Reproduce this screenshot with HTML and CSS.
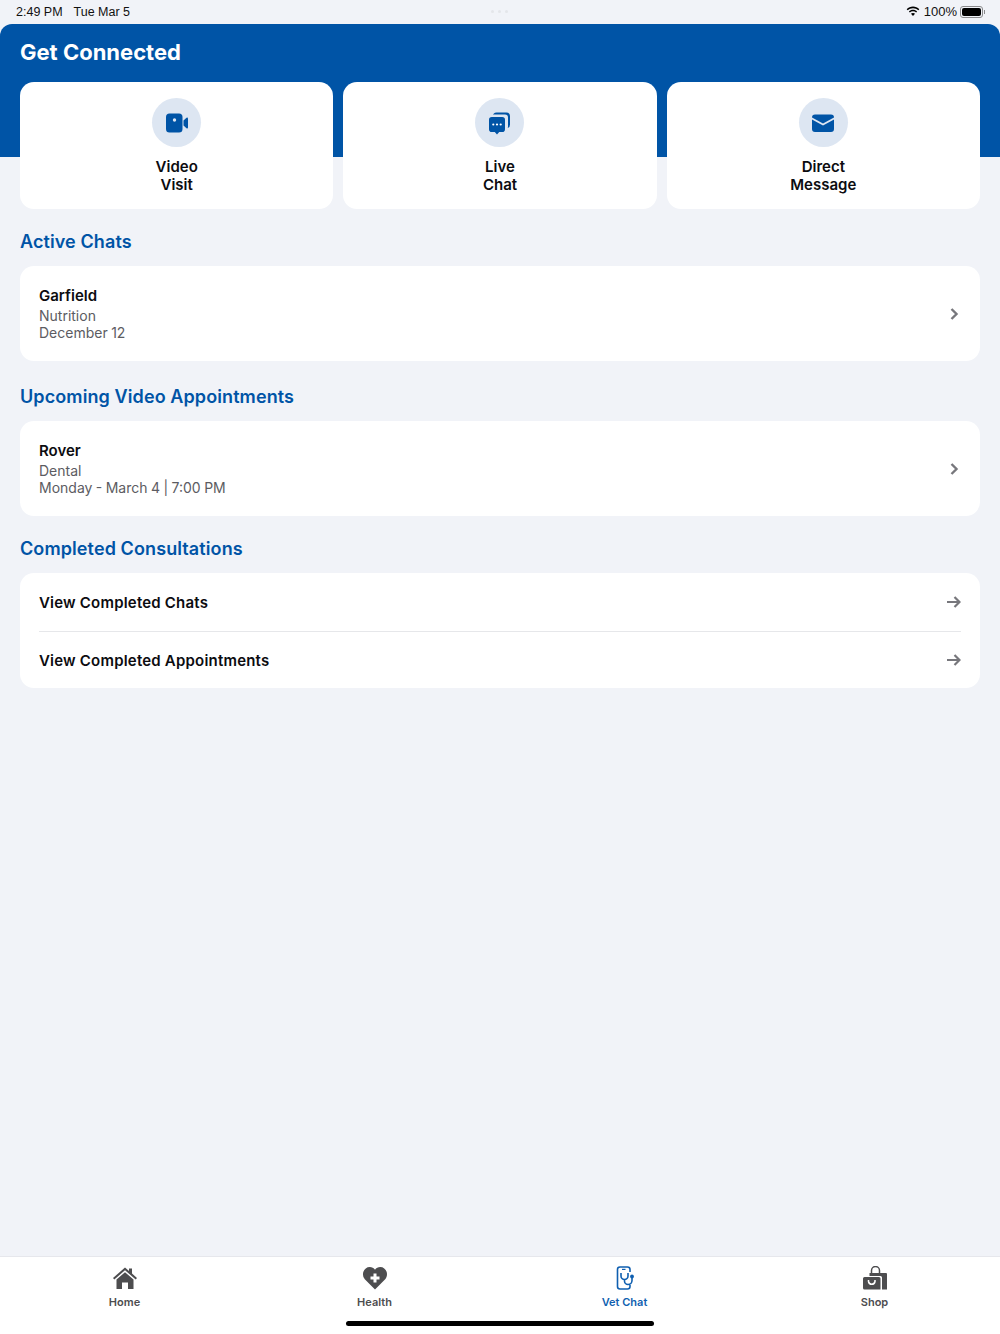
FILE: index.html
```html
<!DOCTYPE html>
<html lang="en">
<head>
    <meta charset="UTF-8">
    <meta name="viewport" content="width=device-width, initial-scale=1.0">
    <title>Get Connected</title>
    <link rel="stylesheet" href="styles.css">
</head>
<body>

<div class="page">
    <div class="status-bar">
        <div class="status-time"><span>2:49 PM</span><span>Tue Mar 5</span></div>
        <div class="status-dots"><i></i><i></i><i></i></div>
        <div class="status-right">
            <svg class="wifi" width="14" height="11" viewBox="0 0 16 12"><path d="M8 2.200c2.400 0 4.500.9 6.100 2.400l1.100-1.200C13.300 1.500 10.800.4 8 .4S2.700 1.500.8 3.400l1.100 1.200C3.500 3.100 5.600 2.200 8 2.200zM8 5.800c1.400 0 2.600.5 3.600 1.400l1.100-1.200C11.400 4.800 9.800 4.100 8 4.100S4.600 4.800 3.300 6l1.100 1.200c1-.9 2.200-1.400 3.600-1.400zM8 7.800c-.9 0-1.700.3-2.300.9L8 11.200l2.300-2.500c-.6-.6-1.400-.9-2.300-.9z" fill="#000"/></svg>
            <span>100%</span>
            <div class="battery"><div class="battery-fill"></div></div>
            <div class="battery-tip"></div>
        </div>
    </div>

    <div class="hero">
        <h1 class="hero-title">Get Connected</h1>
        <div class="connect-row">
            <div class="connect-card">
                <div class="connect-icon">
                    <svg width="24" height="24" viewBox="0 0 24 24"><path d="M4.500 2.500h9.500a3.500 3.500 0 0 1 3.500 3.500v12a3.500 3.500 0 0 1-3.500 3.500H4.500A3.500 3.500 0 0 1 1 18V6a3.500 3.500 0 0 1 3.500-3.500z" fill="#0054a6"/><path d="M18.500 9.500 21.500 6.800a1 1 0 0 1 1.500.7v9a1 1 0 0 1-1.500.7l-3-2.700z" fill="#0054a6"/><circle cx="9.500" cy="9" r="1.700" fill="#dde6f2"/></svg>
                </div>
                <div class="connect-label">Video<br>Visit</div>
            </div>
            <div class="connect-card">
                <div class="connect-icon">
                    <svg width="24" height="24" viewBox="0 0 24 24"><rect x="5" y="1.500" width="17" height="15.500" rx="3.500" fill="#0054a6"/><rect x="3" y="3.500" width="17" height="15" rx="3" fill="#dde6f2"/><path d="M3.800 6h10.400A2.800 2.800 0 0 1 17 8.800v9.400a2.800 2.800 0 0 1-2.800 2.800h-3L9 23.500 6.800 21h-3A2.800 2.800 0 0 1 1 18.200V8.800A2.800 2.800 0 0 1 3.800 6z" fill="#0054a6"/><circle cx="5.300" cy="13.500" r="1.100" fill="#fff"/><circle cx="9" cy="13.500" r="1.100" fill="#fff"/><circle cx="12.700" cy="13.500" r="1.100" fill="#fff"/></svg>
                </div>
                <div class="connect-label">Live<br>Chat</div>
            </div>
            <div class="connect-card">
                <div class="connect-icon">
                    <svg width="24" height="24" viewBox="0 0 24 24"><path d="M4 3.500h16A3 3 0 0 1 23 6.500l-11 6-11-6a3 3 0 0 1 3-3z" fill="#0054a6"/><path d="M1 8.600l11 6 11-6V18a3 3 0 0 1-3 3H4a3 3 0 0 1-3-3z" fill="#0054a6"/></svg>
                </div>
                <div class="connect-label">Direct<br>Message</div>
            </div>
        </div>
    </div>

    <div class="content">
        <h2 class="section-title first">Active Chats</h2>
        <div class="list-card detail">
            <div>
                <div class="item-name">Garfield</div>
                <div class="item-sub">Nutrition</div>
                <div class="item-sub">December 12</div>
            </div>
            <svg class="chevron" width="10" height="14" viewBox="0 0 10 14"><path d="M2.500 2l5 5-5 5" fill="none" stroke="#77777c" stroke-width="2.400"/></svg>
        </div>

        <h2 class="section-title">Upcoming Video Appointments</h2>
        <div class="list-card detail">
            <div>
                <div class="item-name">Rover</div>
                <div class="item-sub">Dental</div>
                <div class="item-sub">Monday - March 4 | 7:00 PM</div>
            </div>
            <svg class="chevron" width="10" height="14" viewBox="0 0 10 14"><path d="M2.500 2l5 5-5 5" fill="none" stroke="#77777c" stroke-width="2.400"/></svg>
        </div>

        <h2 class="section-title third">Completed Consultations</h2>
        <div class="list-card links">
            <div class="link-row">
                <span>View Completed Chats</span>
                <svg width="14" height="12" viewBox="0 0 14 12"><path d="M0 6h12.500M7.500 1l5 5-5 5" fill="none" stroke="#77777c" stroke-width="2.200"/></svg>
            </div>
            <div class="link-row">
                <span>View Completed Appointments</span>
                <svg width="14" height="12" viewBox="0 0 14 12"><path d="M0 6h12.500M7.500 1l5 5-5 5" fill="none" stroke="#77777c" stroke-width="2.200"/></svg>
            </div>
        </div>
    </div>

    <div class="tab-bar">
        <div class="tab">
            <svg width="26" height="24" viewBox="0 0 26 24"><path d="M13 1.500 1 12l1.300 1.400L13 4.200l10.700 9.200L25 12l-5-4.400V2.500h-3v2.500z" fill="#4d4d4f"/><path d="M13 6.200 4.500 13.500V23H10v-6.500h6V23h5.500v-9.500z" fill="#4d4d4f"/></svg>
            <span>Home</span>
        </div>
        <div class="tab">
            <svg width="26" height="24" viewBox="0 0 26 24"><path d="M13 23.500 2.800 13.300A7 7 0 0 1 1 8.300C1 4.300 4 1 7.800 1c2.100 0 4 1 5.200 2.700C14.200 2 16.100 1 18.200 1 22 1 25 4.300 25 8.300c0 1.900-.7 3.700-1.800 5z" fill="#4d4d4f"/><path d="M11.500 7.500h3v3h3v3h-3v3h-3v-3h-3v-3h3z" fill="#fff"/></svg>
            <span>Health</span>
        </div>
        <div class="tab active">
            <svg width="26" height="24" viewBox="0 0 26 24"><path d="M18 6V3.500A2.500 2.500 0 0 0 15.500 1h-7.500a2.500 2.500 0 0 0-2.500 2.500v17a2.500 2.500 0 0 0 2.500 2.500h7.500a2.500 2.500 0 0 0 2.500-2.500V19" fill="none" stroke="#0f5fb0" stroke-width="1.600"/><path d="M10 3.400h3.500" stroke="#0f5fb0" stroke-width="1.200"/><path d="M9 7v3a3.500 3.500 0 0 0 7 0V7M12.500 13.500V15a3.500 3.500 0 0 0 3.500 3.500 4 4 0 0 0 4-4V12" fill="none" stroke="#0f5fb0" stroke-width="1.600"/><circle cx="20" cy="10.500" r="1.900" fill="#0f5fb0"/></svg>
            <span>Vet Chat</span>
        </div>
        <div class="tab">
            <svg width="26" height="24" viewBox="0 0 26 24"><path d="M9.500 7V4.500a4 4 0 0 1 8 0V7" fill="none" stroke="#4d4d4f" stroke-width="1.500"/><path d="M7.500 7H24a1 1 0 0 1 1 1v15.500h-5V11.500a1.500 1.500 0 0 0-1.500-1.500H7.500z" fill="#4d4d4f"/><path d="M2.500 11h14.500a1.500 1.500 0 0 1 1.500 1.500v11h-16A1.500 1.500 0 0 1 1 22v-9.500A1.500 1.500 0 0 1 2.500 11z" fill="#4d4d4f"/><path d="M6.500 14v1.500a3.300 3.300 0 0 0 6.500 0V14" fill="none" stroke="#fff" stroke-width="1.500"/></svg>
            <span>Shop</span>
        </div>
        <div class="home-indicator"></div>
    </div>
</div>

</body>
</html>
```

FILE: styles.css
```css
* {
    box-sizing: border-box;
}
body {
    margin: 0;
    font-family: Inter, "Open Sans", Arial, sans-serif;
    background-color: #f1f3f8;
    color: #0c0c10;
}
.page {
    width: 1000px;
    height: 1334px;
    display: flex;
    flex-direction: column;
    overflow: hidden;
}

/* status bar */
.status-bar {
    height: 24px;
    padding: 0 15px 1px 16px;
    display: flex;
    align-items: center;
    justify-content: space-between;
    position: relative;
    font-family: "Liberation Sans", Arial, sans-serif;
    font-size: 12.5px;
    color: #111;
}
.status-time {
    display: flex;
    gap: 11px;
}
.status-dots {
    position: absolute;
    left: 491px;
    top: 10px;
    display: flex;
    gap: 4px;
}
.status-dots i {
    width: 3px;
    height: 3px;
    border-radius: 50%;
    background-color: #e4e6ea;
}
.status-right {
    display: flex;
    align-items: center;
    font-size: 13px;
}
.wifi {
    margin-right: 4px;
}
.battery {
    width: 23px;
    height: 12px;
    margin-left: 3px;
    padding: 1px;
    border: 1px solid #8a8a8c;
    border-radius: 3px;
}
.battery-fill {
    width: 100%;
    height: 100%;
    background-color: #000;
    border-radius: 2px;
}
.battery-tip {
    width: 1px;
    height: 4px;
    margin-left: 1px;
    background-color: #8a8a8c;
}

/* blue header */
.hero {
    height: 133px;
    padding: 0 20px;
    background-color: #0054a6;
    border-radius: 12px 12px 0 0;
}
.hero-title {
    margin: 0;
    padding-top: 14px;
    height: 58px;
    font-size: 22px;
    line-height: 28px;
    font-weight: 700;
    color: #fff;
}
.connect-row {
    display: flex;
    gap: 10px;
}
.connect-card {
    flex: 1;
    height: 127px;
    padding-top: 16px;
    background-color: #fff;
    border-radius: 14px;
    text-align: center;
}
.connect-icon {
    width: 49px;
    height: 49px;
    margin: 0 auto 11px;
    border-radius: 50%;
    background-color: #dde6f2;
    display: flex;
    align-items: center;
    justify-content: center;
}
.connect-label {
    font-size: 15px;
    line-height: 18px;
    font-weight: 600;
    color: #0c0c10;
}

/* lists */
.content {
    flex: 1;
    padding: 0 20px;
}
.section-title {
    margin: 0;
    font-size: 18px;
    line-height: 24px;
    font-weight: 600;
    letter-spacing: 0.1px;
    color: #0054a6;
    padding: 24px 0 12px;
}
.section-title.first {
    padding-top: 73px;
}
.section-title.third {
    padding-top: 21px;
}
.list-card {
    background-color: #fff;
    border-radius: 14px;
}
.list-card.detail {
    height: 95px;
    padding: 0 21px 0 19px;
    display: flex;
    align-items: center;
    justify-content: space-between;
}
.item-name {
    font-size: 15px;
    line-height: 20px;
    font-weight: 600;
    margin-bottom: 1px;
}
.item-sub {
    font-size: 14px;
    line-height: 17px;
    word-spacing: -0.5px;
    color: #5c5c62;
}
.list-card.links {
    padding: 0 19px;
}
.link-row {
    height: 58px;
    display: flex;
    align-items: center;
    justify-content: space-between;
    font-size: 15px;
    font-weight: 600;
    letter-spacing: 0.2px;
}
.link-row + .link-row {
    height: 57px;
    border-top: 1px solid #e6e7ea;
}

/* bottom tabs */
.tab-bar {
    height: 78px;
    display: grid;
    grid-template-columns: repeat(4, 250px);
    background-color: #fff;
    border-top: 1px solid #e6e7ec;
    position: relative;
}
.tab {
    display: flex;
    flex-direction: column;
    align-items: center;
    padding: 9px 1px 0 0;
    font-size: 11px;
    line-height: 14px;
    font-weight: 600;
    color: #4d4d4f;
}
.tab span {
    margin-top: 5px;
}
.tab.active {
    color: #0f5fb0;
}
.home-indicator {
    position: absolute;
    left: 346px;
    top: 64px;
    width: 308px;
    height: 5px;
    border-radius: 3px;
    background-color: #000;
}
```
